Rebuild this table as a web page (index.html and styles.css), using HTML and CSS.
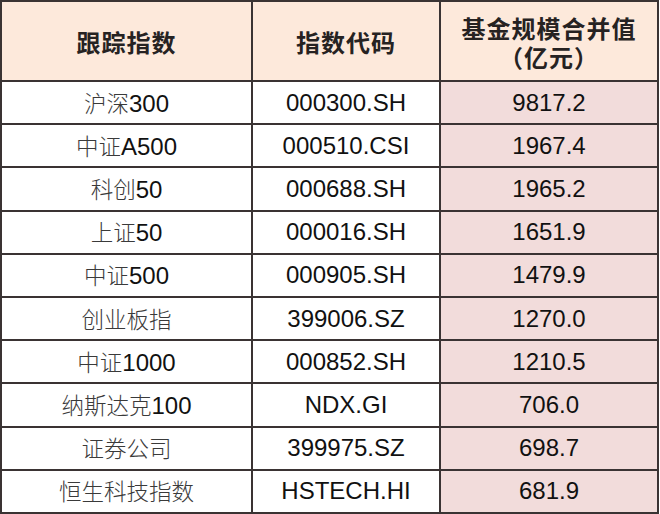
FILE: index.html
```html
<!DOCTYPE html>
<html lang="zh-CN">
<head>
<meta charset="utf-8">
<title>跟踪指数</title>
<link rel="stylesheet" href="styles.css">
</head>
<body>
<table class="fund-table">
  <colgroup>
    <col class="c1">
    <col class="c2">
    <col class="c3">
  </colgroup>
  <thead>
    <tr class="head-row">
      <th>跟踪指数</th>
      <th>指数代码</th>
      <th class="val-head"><span class="hl">基金规模合并值</span><span class="hl">（亿元）</span></th>
    </tr>
  </thead>
  <tbody>
    <tr><td><span class="zh">沪深</span>300</td><td>000300.SH</td><td class="val">9817.2</td></tr>
    <tr><td><span class="zh">中证</span>A500</td><td>000510.CSI</td><td class="val">1967.4</td></tr>
    <tr><td><span class="zh">科创</span>50</td><td>000688.SH</td><td class="val">1965.2</td></tr>
    <tr><td><span class="zh">上证</span>50</td><td>000016.SH</td><td class="val">1651.9</td></tr>
    <tr><td><span class="zh">中证</span>500</td><td>000905.SH</td><td class="val">1479.9</td></tr>
    <tr><td><span class="zh">创业板指</span></td><td>399006.SZ</td><td class="val">1270.0</td></tr>
    <tr><td><span class="zh">中证</span>1000</td><td>000852.SH</td><td class="val">1210.5</td></tr>
    <tr><td><span class="zh">纳斯达克</span>100</td><td>NDX.GI</td><td class="val">706.0</td></tr>
    <tr><td><span class="zh">证券公司</span></td><td>399975.SZ</td><td class="val">698.7</td></tr>
    <tr><td><span class="zh">恒生科技指数</span></td><td>HSTECH.HI</td><td class="val">681.9</td></tr>
  </tbody>
</table>
</body>
</html>
```

FILE: styles.css
```css
html, body {
  margin: 0;
  padding: 0;
  background: #ffffff;
}

.fund-table {
  border-collapse: collapse;
  table-layout: fixed;
  width: 659px;
  margin: 0;
  font-family: "Liberation Sans", "Noto Sans CJK SC", sans-serif;
  font-size: 24px;
  color: #111111;
}

.c1 { width: 251px; }
.c2 { width: 188px; }
.c3 { width: 218px; }

.fund-table th,
.fund-table td {
  border: 2px solid #3a3333;
  text-align: center;
  vertical-align: middle;
  padding: 0;
}

.head-row {
  height: 80px;
}

.head-row th {
  background: #fde9db;
  font-family: "Noto Sans CJK SC", sans-serif;
  font-weight: 700;
  font-size: 24px;
  letter-spacing: 1px;
  line-height: 29px;
  color: #262222;
}

.head-row th.val-head {
  padding-top: 2px;
}

.hl {
  display: block;
  height: 29px;
  line-height: 29px;
  overflow: visible;
}

.fund-table tbody tr {
  height: 43.2px;
}

.fund-table td {
  line-height: 28px;
}

.fund-table td.val {
  background: #f2dcdb;
}

.zh {
  font-family: "Noto Sans CJK SC", sans-serif;
  font-weight: 300;
  font-size: 22.5px;
  color: #3a3a3a;
}
```
